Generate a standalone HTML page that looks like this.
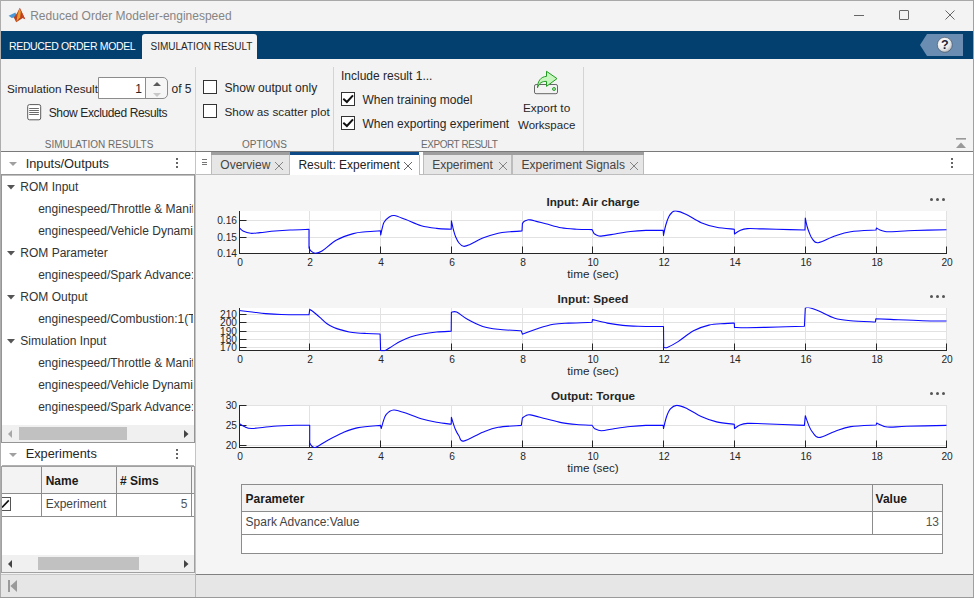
<!DOCTYPE html>
<html><head><meta charset="utf-8"><title>Reduced Order Modeler</title>
<style>
html,body{margin:0;padding:0;}
body{width:974px;height:598px;overflow:hidden;position:relative;background:#f3f3f3;font-family:"Liberation Sans", sans-serif;}
</style></head><body>
<div style="position:absolute;left:0px;top:0px;width:974px;height:1px;background:#a8a8a8"></div>
<div style="position:absolute;left:0px;top:0px;width:1px;height:598px;background:#adadad"></div>
<div style="position:absolute;left:973px;top:0px;width:1px;height:598px;background:#a0a0a0"></div>
<svg style="position:absolute;left:8px;top:7px" width="18" height="17" viewBox="0 0 18 17">
<path d="M0.6 8.8 L7.4 5.4 L9 10 L3.8 11 Z" fill="#4a97d6"/>
<path d="M5.8 10.6 L8.8 6.6 L11.8 0.8 L17.2 12.2 L14.8 11 L8.2 15.2 Z" fill="#b8401c"/>
<path d="M11.6 1.2 L9.6 7.5 L8.4 14.8 L12.2 10.2 L12.8 4.2 Z" fill="#ec9a2e"/>
<path d="M11.9 0.9 L17.2 12.2 L14.6 10.8 Z" fill="#c9452a"/>
</svg>
<div style="position:absolute;left:30.20px;top:9.84px;font-size:12px;line-height:12px;font-weight:400;color:#858585;white-space:nowrap;">Reduced Order Modeler-enginespeed</div>
<div style="position:absolute;left:854px;top:15px;width:10px;height:1px;background:#666"></div>
<div style="position:absolute;left:899px;top:10px;width:10px;height:10px;border:1px solid #666;box-sizing:border-box;border-radius:1px"></div>
<svg style="position:absolute;left:944px;top:9px" width="12" height="12" viewBox="0 0 12 12">
<path d="M1.5 1.5 L10.5 10.5 M10.5 1.5 L1.5 10.5" stroke="#666" stroke-width="1" fill="none"/></svg>
<div style="position:absolute;left:1px;top:31px;width:972px;height:28px;background:#03406f"></div>
<div style="position:absolute;left:9.00px;top:41.11px;font-size:10.5px;line-height:10.5px;font-weight:400;color:#ffffff;white-space:nowrap;letter-spacing:-0.35px">REDUCED ORDER MODEL</div>
<div style="position:absolute;left:142px;top:34px;width:115px;height:25px;background:#f3f3f3;border-radius:3px 3px 0 0"></div>
<div style="position:absolute;left:150.50px;top:41.83px;font-size:10px;line-height:10px;font-weight:400;color:#262626;white-space:nowrap;">SIMULATION RESULT</div>
<svg style="position:absolute;left:920px;top:34px" width="45" height="23" viewBox="0 0 45 23">
<path d="M7 0 H43 V22 H7 L0 11 Z" fill="#6b8db1"/>
<defs><radialGradient id="hg" cx="0.4" cy="0.35" r="0.75"><stop offset="0" stop-color="#ffffff"/><stop offset="0.6" stop-color="#e8e8e8"/><stop offset="1" stop-color="#a0a4aa"/></radialGradient></defs>
<circle cx="24.8" cy="10.8" r="7.5" fill="url(#hg)" stroke="#3a4a60" stroke-width="0.6"/>
<text x="24.8" y="15.3" text-anchor="middle" font-family="Liberation Sans" font-weight="700" font-size="12.5" fill="#1c2638">?</text>
</svg>
<div style="position:absolute;left:1px;top:59px;width:972px;height:92px;background:#f3f3f3"></div>
<div style="position:absolute;left:195px;top:67px;width:1px;height:84px;background:#d4d4d4"></div>
<div style="position:absolute;left:333px;top:67px;width:1px;height:84px;background:#d4d4d4"></div>
<div style="position:absolute;left:583px;top:67px;width:1px;height:84px;background:#d4d4d4"></div>
<div style="position:absolute;left:7.00px;top:82.90px;font-size:11.7px;line-height:11.7px;font-weight:400;color:#262626;white-space:nowrap;">Simulation Result</div>
<div style="position:absolute;left:98px;top:77px;width:70px;height:22px;background:linear-gradient(to right,#fff 47px,#f6f6f6 47px);border:1px solid #8c8c8c;box-sizing:border-box;border-radius:0 5px 5px 0"></div>
<div style="position:absolute;left:145px;top:78px;width:1px;height:20px;background:#8c8c8c"></div>
<div style="position:absolute;right:832.00px;top:82.64px;font-size:12px;line-height:12px;font-weight:400;color:#262626;white-space:nowrap;">1</div>
<svg style="position:absolute;left:150px;top:80px" width="14" height="18" viewBox="0 0 14 18">
<path d="M3 6 L7 2 L11 6 Z" fill="#5a5a5a"/><path d="M3 13 L7 17 L11 13 Z" fill="#c8c8c8"/></svg>
<div style="position:absolute;left:171.50px;top:82.64px;font-size:12px;line-height:12px;font-weight:400;color:#262626;white-space:nowrap;">of 5</div>
<svg style="position:absolute;left:26px;top:103px" width="16" height="18" viewBox="0 0 16 18">
<rect x="1.7" y="1.6" width="13" height="15.2" rx="1.8" fill="#fff" stroke="#5a5a5a" stroke-width="1"/>
<path d="M3.2 5.5 H12.9 M3.2 7.5 H12.9 M3.2 9.5 H12.9 M3.2 11.5 H12.9" stroke="#5a5a5a" stroke-width="0.9"/></svg>
<div style="position:absolute;left:48.70px;top:106.84px;font-size:12px;line-height:12px;font-weight:400;color:#262626;white-space:nowrap;letter-spacing:-0.36px">Show Excluded Results</div>
<div style="position:absolute;left:44.80px;top:139.53px;font-size:10px;line-height:10px;font-weight:400;color:#6b6b6b;white-space:nowrap;">SIMULATION RESULTS</div>
<div style="position:absolute;left:203px;top:80px;width:14px;height:14px;background:#fff;border:1px solid #333;box-sizing:border-box"></div>
<div style="position:absolute;left:203px;top:104px;width:14px;height:14px;background:#fff;border:1px solid #333;box-sizing:border-box"></div>
<div style="position:absolute;left:224.40px;top:82.16px;font-size:12.1px;line-height:12.1px;font-weight:400;color:#262626;white-space:nowrap;">Show output only</div>
<div style="position:absolute;left:224.40px;top:106.00px;font-size:11.7px;line-height:11.7px;font-weight:400;color:#262626;white-space:nowrap;">Show as scatter plot</div>
<div style="position:absolute;left:242.00px;top:139.53px;font-size:10px;line-height:10px;font-weight:400;color:#6b6b6b;white-space:nowrap;">OPTIONS</div>
<div style="position:absolute;left:341.00px;top:70.04px;font-size:12px;line-height:12px;font-weight:400;color:#262626;white-space:nowrap;">Include result 1...</div>
<div style="position:absolute;left:341px;top:92px;width:14px;height:14px;background:#fff;border:1px solid #333;box-sizing:border-box"></div>
<svg style="position:absolute;left:341px;top:92px" width="14" height="14" viewBox="0 0 14 14">
<path d="M2.3 6.8 L5.9 10 L12 3.4" stroke="#111" stroke-width="2" fill="none"/></svg>
<div style="position:absolute;left:341px;top:116px;width:14px;height:14px;background:#fff;border:1px solid #333;box-sizing:border-box"></div>
<svg style="position:absolute;left:341px;top:116px" width="14" height="14" viewBox="0 0 14 14">
<path d="M2.3 6.8 L5.9 10 L12 3.4" stroke="#111" stroke-width="2" fill="none"/></svg>
<div style="position:absolute;left:362.40px;top:94.24px;font-size:12px;line-height:12px;font-weight:400;color:#262626;white-space:nowrap;">When training model</div>
<div style="position:absolute;left:362.40px;top:117.64px;font-size:12px;line-height:12px;font-weight:400;color:#262626;white-space:nowrap;">When exporting experiment</div>
<svg style="position:absolute;left:532px;top:70px" width="28" height="26" viewBox="0 0 28 26">
<rect x="2.5" y="14.5" width="23" height="9.2" rx="1.6" fill="none" stroke="#666" stroke-width="1"/>
<circle cx="22" cy="19" r="1.5" fill="#a6dca6" stroke="#1f9b1f" stroke-width="0.9"/>
<path d="M5.5 17.8 C5.5 11 9 6.6 14.5 6.4 L14.5 1.3 L25 8.6 L14.5 16.4 L14.5 11.4 C10 11.2 7 13 5.5 17.8 Z" fill="#c6f5bd" stroke="#1f9b1f" stroke-width="1" stroke-linejoin="miter"/>
</svg>
<div style="position:absolute;left:523.00px;top:103.01px;font-size:11.8px;line-height:11.8px;font-weight:400;color:#262626;white-space:nowrap;">Export to</div>
<div style="position:absolute;left:518.00px;top:119.87px;font-size:11.5px;line-height:11.5px;font-weight:400;color:#262626;white-space:nowrap;">Workspace</div>
<div style="position:absolute;left:421.00px;top:139.53px;font-size:10px;line-height:10px;font-weight:400;color:#6b6b6b;white-space:nowrap;letter-spacing:-0.45px">EXPORT RESULT</div>
<svg style="position:absolute;left:955px;top:137px" width="12" height="12" viewBox="0 0 12 12">
<rect x="1" y="1" width="10" height="1.6" fill="#999"/><path d="M1 11 L6 5.5 L11 11 Z" fill="#999"/></svg>
<div style="position:absolute;left:1px;top:151px;width:972px;height:1px;background:#7a7a7a"></div>
<div style="position:absolute;left:1px;top:152px;width:194px;height:422px;background:#f3f3f3"></div>
<div style="position:absolute;left:195px;top:152px;width:1px;height:422px;background:#c4c4c4"></div>
<div style="position:absolute;left:1px;top:152px;width:194px;height:22px;background:#fff"></div>
<svg style="position:absolute;left:8px;top:160px" width="10" height="8" viewBox="0 0 10 8"><path d="M1 2 L9 2 L5 6 Z" fill="#a0a0a0"/></svg>
<div style="position:absolute;left:25.70px;top:157.56px;font-size:12.8px;line-height:12.8px;font-weight:400;color:#262626;white-space:nowrap;">Inputs/Outputs</div>
<div style="position:absolute;left:176px;top:158px;width:2px;height:2px;background:#666"></div>
<div style="position:absolute;left:176px;top:162px;width:2px;height:2px;background:#666"></div>
<div style="position:absolute;left:176px;top:166px;width:2px;height:2px;background:#666"></div>
<div style="position:absolute;left:1px;top:174px;width:194px;height:269px;background:#fff;border:1px solid #959595;box-sizing:border-box"></div>
<div style="position:absolute;left:2px;top:175px;width:192px;height:1px;background:#c0c0c0"></div>
<svg style="position:absolute;left:6px;top:183px" width="10" height="8" viewBox="0 0 10 8"><path d="M1 2 L9 2 L5 6.5 Z" fill="#555"/></svg>
<div style="position:absolute;left:20.30px;top:180.84px;font-size:12px;line-height:12px;font-weight:400;color:#333;white-space:nowrap;">ROM Input</div>
<div style="position:absolute;left:38.2px;top:202.84px;width:155px;overflow:hidden;font-size:12px;line-height:12px;padding-bottom:4px;color:#333;white-space:nowrap">enginespeed/Throttle &amp; Manifold</div>
<div style="position:absolute;left:38.2px;top:224.84px;width:155px;overflow:hidden;font-size:12px;line-height:12px;padding-bottom:4px;color:#333;white-space:nowrap">enginespeed/Vehicle Dynamics</div>
<svg style="position:absolute;left:6px;top:249px" width="10" height="8" viewBox="0 0 10 8"><path d="M1 2 L9 2 L5 6.5 Z" fill="#555"/></svg>
<div style="position:absolute;left:20.30px;top:246.84px;font-size:12px;line-height:12px;font-weight:400;color:#333;white-space:nowrap;">ROM Parameter</div>
<div style="position:absolute;left:38.2px;top:268.84px;width:155px;overflow:hidden;font-size:12px;line-height:12px;padding-bottom:4px;color:#333;white-space:nowrap">enginespeed/Spark Advance:Value</div>
<svg style="position:absolute;left:6px;top:293px" width="10" height="8" viewBox="0 0 10 8"><path d="M1 2 L9 2 L5 6.5 Z" fill="#555"/></svg>
<div style="position:absolute;left:20.30px;top:290.84px;font-size:12px;line-height:12px;font-weight:400;color:#333;white-space:nowrap;">ROM Output</div>
<div style="position:absolute;left:38.2px;top:312.84px;width:155px;overflow:hidden;font-size:12px;line-height:12px;padding-bottom:4px;color:#333;white-space:nowrap">enginespeed/Combustion:1(Torque)</div>
<svg style="position:absolute;left:6px;top:337px" width="10" height="8" viewBox="0 0 10 8"><path d="M1 2 L9 2 L5 6.5 Z" fill="#555"/></svg>
<div style="position:absolute;left:20.30px;top:334.84px;font-size:12px;line-height:12px;font-weight:400;color:#333;white-space:nowrap;">Simulation Input</div>
<div style="position:absolute;left:38.2px;top:356.84px;width:155px;overflow:hidden;font-size:12px;line-height:12px;padding-bottom:4px;color:#333;white-space:nowrap">enginespeed/Throttle &amp; Manifold</div>
<div style="position:absolute;left:38.2px;top:378.84px;width:155px;overflow:hidden;font-size:12px;line-height:12px;padding-bottom:4px;color:#333;white-space:nowrap">enginespeed/Vehicle Dynamics</div>
<div style="position:absolute;left:38.2px;top:400.84px;width:155px;overflow:hidden;font-size:12px;line-height:12px;padding-bottom:4px;color:#333;white-space:nowrap">enginespeed/Spark Advance:Value</div>
<div style="position:absolute;left:2px;top:425px;width:192px;height:17px;background:#f0f0f0"></div>
<div style="position:absolute;left:19px;top:427px;width:108px;height:13px;background:#c1c1c1"></div>
<svg style="position:absolute;left:6px;top:429px" width="8" height="10" viewBox="0 0 8 10"><path d="M6 1 L6 9 L2 5 Z" fill="#a8a8a8"/></svg>
<svg style="position:absolute;left:182px;top:429px" width="8" height="10" viewBox="0 0 8 10"><path d="M2 1 L2 9 L6.5 5 Z" fill="#444"/></svg>
<div style="position:absolute;left:1px;top:443px;width:194px;height:23px;background:#fff"></div>
<svg style="position:absolute;left:8px;top:451px" width="10" height="8" viewBox="0 0 10 8"><path d="M1 2 L9 2 L5 6 Z" fill="#a0a0a0"/></svg>
<div style="position:absolute;left:25.70px;top:448.36px;font-size:12.8px;line-height:12.8px;font-weight:400;color:#262626;white-space:nowrap;">Experiments</div>
<div style="position:absolute;left:176px;top:449px;width:2px;height:2px;background:#666"></div>
<div style="position:absolute;left:176px;top:453px;width:2px;height:2px;background:#666"></div>
<div style="position:absolute;left:176px;top:457px;width:2px;height:2px;background:#666"></div>
<div style="position:absolute;left:1px;top:466px;width:194px;height:107px;background:#fff;border:1px solid #a0a0a0;box-sizing:border-box"></div>
<div style="position:absolute;left:2px;top:465px;width:192px;height:1px;background:#b0b0b0"></div>
<div style="position:absolute;left:2px;top:467px;width:192px;height:26px;background:#f3f3f3"></div>
<div style="position:absolute;left:2px;top:493px;width:192px;height:1px;background:#8c8c8c"></div>
<div style="position:absolute;left:2px;top:516px;width:192px;height:1px;background:#8c8c8c"></div>
<div style="position:absolute;left:41px;top:467px;width:1px;height:50px;background:#8c8c8c"></div>
<div style="position:absolute;left:116px;top:467px;width:1px;height:50px;background:#8c8c8c"></div>
<div style="position:absolute;left:191px;top:467px;width:1px;height:50px;background:#8c8c8c"></div>
<div style="position:absolute;left:45.70px;top:475.24px;font-size:12px;line-height:12px;font-weight:700;color:#1a1a1a;white-space:nowrap;">Name</div>
<div style="position:absolute;left:120.00px;top:475.24px;font-size:12px;line-height:12px;font-weight:700;color:#1a1a1a;white-space:nowrap;"># Sims</div>
<div style="position:absolute;left:45.70px;top:498.04px;font-size:12px;line-height:12px;font-weight:400;color:#444;white-space:nowrap;">Experiment</div>
<div style="position:absolute;right:786.50px;top:498.04px;font-size:12px;line-height:12px;font-weight:400;color:#555;white-space:nowrap;">5</div>
<div style="position:absolute;left:2px;top:497px;width:9px;height:14px;background:#fff;border:1px solid #555;border-left:none;box-sizing:border-box"></div>
<svg style="position:absolute;left:2px;top:497px" width="10" height="14" viewBox="0 0 10 14"><path d="M0 10.5 L6.8 3.4" stroke="#111" stroke-width="1.6"/></svg>
<div style="position:absolute;left:2px;top:555px;width:192px;height:17px;background:#f0f0f0"></div>
<div style="position:absolute;left:38px;top:557px;width:101px;height:13px;background:#c1c1c1"></div>
<svg style="position:absolute;left:6px;top:559px" width="8" height="10" viewBox="0 0 8 10"><path d="M6 1 L6 9 L2 5 Z" fill="#444"/></svg>
<svg style="position:absolute;left:182px;top:559px" width="8" height="10" viewBox="0 0 8 10"><path d="M2 1 L2 9 L6.5 5 Z" fill="#444"/></svg>
<div style="position:absolute;left:1px;top:574px;width:194px;height:1px;background:#c8c8c8"></div>
<div style="position:absolute;left:196px;top:574px;width:777px;height:1px;background:#808080"></div>
<div style="position:absolute;left:1px;top:575px;width:972px;height:23px;background:#e6e6e6"></div>
<div style="position:absolute;left:195px;top:574px;width:1px;height:24px;background:#b8b8b8"></div>
<svg style="position:absolute;left:7px;top:579px" width="12" height="14" viewBox="0 0 12 14"><rect x="1" y="1" width="2" height="12" fill="#9a9a9a"/><path d="M10 1 L10 13 L3.4 7 Z" fill="#9a9a9a"/></svg>
<div style="position:absolute;left:0px;top:597px;width:974px;height:1px;background:#9a9a9a"></div>
<div style="position:absolute;left:196px;top:152px;width:777px;height:422px;background:#f5f5f5"></div>
<div style="position:absolute;left:196px;top:152px;width:777px;height:22px;background:#fff"></div>
<div style="position:absolute;left:196px;top:174px;width:777px;height:1px;background:#bdbdbd"></div>
<div style="position:absolute;left:202px;top:159px;width:5px;height:1px;background:#777"></div>
<div style="position:absolute;left:202px;top:161.5px;width:5px;height:1px;background:#777"></div>
<div style="position:absolute;left:202px;top:164px;width:5px;height:1px;background:#777"></div>
<div style="position:absolute;left:211px;top:152px;width:79px;height:22px;background:#e6e6e6;border-left:1px solid #bcbcbc;border-right:1px solid #bcbcbc;box-sizing:border-box"></div>
<div style="position:absolute;left:211px;top:152px;width:79px;height:3px;background:#9e9e9e"></div>
<div style="position:absolute;left:220.30px;top:158.54px;font-size:12px;line-height:12px;font-weight:400;color:#444;white-space:nowrap;">Overview</div>
<div style="position:absolute;left:290px;top:152px;width:129px;height:23px;background:#fff"></div>
<div style="position:absolute;left:290px;top:152px;width:129px;height:3px;background:#0e4a86"></div>
<div style="position:absolute;left:298.40px;top:158.54px;font-size:12px;line-height:12px;font-weight:400;color:#222;white-space:nowrap;">Result: Experiment</div>
<div style="position:absolute;left:423px;top:152px;width:89px;height:22px;background:#e6e6e6;border-left:1px solid #bcbcbc;border-right:1px solid #bcbcbc;box-sizing:border-box"></div>
<div style="position:absolute;left:423px;top:152px;width:89px;height:3px;background:#9e9e9e"></div>
<div style="position:absolute;left:432.20px;top:158.54px;font-size:12px;line-height:12px;font-weight:400;color:#444;white-space:nowrap;">Experiment</div>
<div style="position:absolute;left:512px;top:152px;width:132px;height:22px;background:#e6e6e6;border-left:1px solid #bcbcbc;border-right:1px solid #bcbcbc;box-sizing:border-box"></div>
<div style="position:absolute;left:512px;top:152px;width:132px;height:3px;background:#9e9e9e"></div>
<div style="position:absolute;left:521.50px;top:158.54px;font-size:12px;line-height:12px;font-weight:400;color:#444;white-space:nowrap;">Experiment Signals</div>
<div style="position:absolute;left:419px;top:155px;width:1px;height:20px;background:#bcbcbc"></div>
<svg style="position:absolute;left:274px;top:161px" width="10" height="10" viewBox="0 0 10 10"><path d="M1 1 L9 9 M9 1 L1 9" stroke="#777" stroke-width="0.9"/></svg>
<svg style="position:absolute;left:403px;top:161px" width="10" height="10" viewBox="0 0 10 10"><path d="M1 1 L9 9 M9 1 L1 9" stroke="#555" stroke-width="0.9"/></svg>
<svg style="position:absolute;left:497.5px;top:161px" width="10" height="10" viewBox="0 0 10 10"><path d="M1 1 L9 9 M9 1 L1 9" stroke="#777" stroke-width="0.9"/></svg>
<svg style="position:absolute;left:628.5px;top:161px" width="10" height="10" viewBox="0 0 10 10"><path d="M1 1 L9 9 M9 1 L1 9" stroke="#777" stroke-width="0.9"/></svg>
<div style="position:absolute;left:951px;top:158px;width:2px;height:2px;background:#666"></div>
<div style="position:absolute;left:951px;top:162px;width:2px;height:2px;background:#666"></div>
<div style="position:absolute;left:951px;top:166px;width:2px;height:2px;background:#666"></div>
<svg style="position:absolute;left:0;top:0" width="974" height="598" viewBox="0 0 974 598">
<defs>
<clipPath id="cp0"><rect x="239.0" y="210.5" width="708.0" height="44.0"/></clipPath>
<clipPath id="cp1"><rect x="239.0" y="307.5" width="708.0" height="44.0"/></clipPath>
<clipPath id="cp2"><rect x="239.0" y="404.5" width="708.0" height="44.0"/></clipPath>
</defs>
<rect x="239.0" y="211" width="708.0" height="42.5" fill="#fff"/>
<line x1="309.50" y1="211" x2="309.50" y2="253.5" stroke="#e2e2e2" stroke-width="1"/>
<line x1="380.50" y1="211" x2="380.50" y2="253.5" stroke="#e2e2e2" stroke-width="1"/>
<line x1="451.50" y1="211" x2="451.50" y2="253.5" stroke="#e2e2e2" stroke-width="1"/>
<line x1="522.50" y1="211" x2="522.50" y2="253.5" stroke="#e2e2e2" stroke-width="1"/>
<line x1="592.50" y1="211" x2="592.50" y2="253.5" stroke="#e2e2e2" stroke-width="1"/>
<line x1="663.50" y1="211" x2="663.50" y2="253.5" stroke="#e2e2e2" stroke-width="1"/>
<line x1="734.50" y1="211" x2="734.50" y2="253.5" stroke="#e2e2e2" stroke-width="1"/>
<line x1="805.50" y1="211" x2="805.50" y2="253.5" stroke="#e2e2e2" stroke-width="1"/>
<line x1="876.50" y1="211" x2="876.50" y2="253.5" stroke="#e2e2e2" stroke-width="1"/>
<line x1="946.50" y1="211" x2="946.50" y2="253.5" stroke="#e2e2e2" stroke-width="1"/>
<line x1="239.5" y1="220.5" x2="946.5" y2="220.5" stroke="#e2e2e2" stroke-width="1"/>
<line x1="239.5" y1="237.5" x2="946.5" y2="237.5" stroke="#e2e2e2" stroke-width="1"/>
<line x1="239.5" y1="211" x2="239.5" y2="254.0" stroke="#262626" stroke-width="1"/>
<line x1="239.0" y1="253.5" x2="947.0" y2="253.5" stroke="#262626" stroke-width="1"/>
<line x1="239.5" y1="220.5" x2="246.5" y2="220.5" stroke="#262626" stroke-width="1"/>
<text x="237" y="223.80" text-anchor="end" font-family="Liberation Sans" font-size="10.2" fill="#262626">0.16</text>
<line x1="239.5" y1="237.5" x2="246.5" y2="237.5" stroke="#262626" stroke-width="1"/>
<text x="237" y="240.80" text-anchor="end" font-family="Liberation Sans" font-size="10.2" fill="#262626">0.15</text>
<line x1="239.5" y1="253.5" x2="246.5" y2="253.5" stroke="#262626" stroke-width="1"/>
<text x="237" y="256.80" text-anchor="end" font-family="Liberation Sans" font-size="10.2" fill="#262626">0.14</text>
<line x1="239.50" y1="246.5" x2="239.50" y2="253.5" stroke="#262626" stroke-width="1"/>
<text x="240.10" y="266.0" text-anchor="middle" font-family="Liberation Sans" font-size="10.2" fill="#262626">0</text>
<line x1="309.50" y1="246.5" x2="309.50" y2="253.5" stroke="#262626" stroke-width="1"/>
<text x="310.10" y="266.0" text-anchor="middle" font-family="Liberation Sans" font-size="10.2" fill="#262626">2</text>
<line x1="380.50" y1="246.5" x2="380.50" y2="253.5" stroke="#262626" stroke-width="1"/>
<text x="381.10" y="266.0" text-anchor="middle" font-family="Liberation Sans" font-size="10.2" fill="#262626">4</text>
<line x1="451.50" y1="246.5" x2="451.50" y2="253.5" stroke="#262626" stroke-width="1"/>
<text x="452.10" y="266.0" text-anchor="middle" font-family="Liberation Sans" font-size="10.2" fill="#262626">6</text>
<line x1="522.50" y1="246.5" x2="522.50" y2="253.5" stroke="#262626" stroke-width="1"/>
<text x="523.10" y="266.0" text-anchor="middle" font-family="Liberation Sans" font-size="10.2" fill="#262626">8</text>
<line x1="592.50" y1="246.5" x2="592.50" y2="253.5" stroke="#262626" stroke-width="1"/>
<text x="593.10" y="266.0" text-anchor="middle" font-family="Liberation Sans" font-size="10.2" fill="#262626">10</text>
<line x1="663.50" y1="246.5" x2="663.50" y2="253.5" stroke="#262626" stroke-width="1"/>
<text x="664.10" y="266.0" text-anchor="middle" font-family="Liberation Sans" font-size="10.2" fill="#262626">12</text>
<line x1="734.50" y1="246.5" x2="734.50" y2="253.5" stroke="#262626" stroke-width="1"/>
<text x="735.10" y="266.0" text-anchor="middle" font-family="Liberation Sans" font-size="10.2" fill="#262626">14</text>
<line x1="805.50" y1="246.5" x2="805.50" y2="253.5" stroke="#262626" stroke-width="1"/>
<text x="806.10" y="266.0" text-anchor="middle" font-family="Liberation Sans" font-size="10.2" fill="#262626">16</text>
<line x1="876.50" y1="246.5" x2="876.50" y2="253.5" stroke="#262626" stroke-width="1"/>
<text x="877.10" y="266.0" text-anchor="middle" font-family="Liberation Sans" font-size="10.2" fill="#262626">18</text>
<line x1="946.50" y1="246.5" x2="946.50" y2="253.5" stroke="#262626" stroke-width="1"/>
<text x="947.10" y="266.0" text-anchor="middle" font-family="Liberation Sans" font-size="10.2" fill="#262626">20</text>
<path d="M239,227.5 C239.67,228.08 241.05,230.03 243.00,231.00 C244.95,231.97 247.87,233.03 250.70,233.30 C253.53,233.57 255.95,232.98 260.00,232.60 C264.05,232.22 270.00,231.43 275.00,231.00 C280.00,230.57 284.33,230.27 290.00,230.00 C295.67,229.73 305.83,229.50 309.00,229.40 L309,247.9 C309.33,248.42 309.93,250.12 311.00,251.00 C312.07,251.88 313.57,253.20 315.40,253.20 C317.23,253.20 318.47,253.20 322.00,251.00 C325.53,248.80 331.38,242.90 336.60,240.00 C341.82,237.10 348.40,234.97 353.30,233.60 C358.20,232.23 361.47,232.25 366.00,231.80 C370.53,231.35 378.08,231.05 380.50,230.90 L380.7,235 C381.00,233.67 381.92,229.17 382.50,227.00 C383.08,224.83 383.13,223.62 384.20,222.00 C385.27,220.38 387.22,218.38 388.90,217.30 C390.58,216.22 391.48,215.12 394.30,215.50 C397.12,215.88 401.32,217.88 405.80,219.60 C410.28,221.32 416.07,224.33 421.20,225.80 C426.33,227.27 431.60,227.83 436.60,228.40 C441.60,228.97 448.77,229.07 451.20,229.20 L451.4,220.9 C451.75,222.42 452.82,227.40 453.50,230.00 C454.18,232.60 454.58,234.33 455.50,236.50 C456.42,238.67 457.65,241.37 459.00,243.00 C460.35,244.63 461.77,246.05 463.60,246.30 C465.43,246.55 466.80,245.87 470.00,244.50 C473.20,243.13 478.10,239.98 482.80,238.10 C487.50,236.22 493.67,234.25 498.20,233.20 C502.73,232.15 506.03,232.17 510.00,231.80 C513.97,231.43 520.00,231.13 522.00,231.00 L522.4,223.5 C522.67,223.17 523.23,222.05 524.00,221.50 C524.77,220.95 525.93,220.47 527.00,220.20 C528.07,219.93 527.27,219.30 530.40,219.90 C533.53,220.50 540.67,222.48 545.80,223.80 C550.93,225.12 556.07,226.90 561.20,227.80 C566.33,228.70 571.47,228.90 576.60,229.20 C581.73,229.50 589.43,229.53 592.00,229.60 L594,233.5 C594.58,233.83 596.30,235.07 597.50,235.50 C598.70,235.93 598.27,236.35 601.20,236.10 C604.13,235.85 610.22,234.77 615.10,234.00 C619.98,233.23 625.37,232.10 630.50,231.50 C635.63,230.90 640.45,230.58 645.90,230.40 C651.35,230.22 660.32,230.40 663.20,230.40 L663.5,235.5 C663.88,233.75 664.90,228.15 665.80,225.00 C666.70,221.85 667.87,218.68 668.90,216.60 C669.93,214.52 670.85,213.45 672.00,212.50 C673.15,211.55 673.50,210.62 675.80,210.90 C678.10,211.18 681.57,212.23 685.80,214.20 C690.03,216.17 696.07,220.52 701.20,222.70 C706.33,224.88 711.08,226.22 716.60,227.30 C722.12,228.38 731.35,228.88 734.30,229.20 L734.5,234 C735.42,233.42 737.85,231.40 740.00,230.50 C742.15,229.60 743.60,228.87 747.40,228.60 C751.20,228.33 755.70,228.73 762.80,228.90 C769.90,229.07 782.97,229.42 790.00,229.60 C797.03,229.78 802.50,229.93 805.00,230.00 L805.3,218 C805.58,219.33 806.33,223.53 807.00,226.00 C807.67,228.47 808.38,230.60 809.30,232.80 C810.22,235.00 811.03,237.55 812.50,239.20 C813.97,240.85 814.38,243.23 818.10,242.70 C821.82,242.17 829.37,237.83 834.80,236.00 C840.23,234.17 843.83,232.70 850.70,231.70 C857.57,230.70 871.78,230.28 876.00,230.00 L876.5,228 C877.08,228.33 878.73,229.45 880.00,230.00 C881.27,230.55 882.35,231.02 884.10,231.30 C885.85,231.58 885.45,231.83 890.50,231.70 C895.55,231.57 905.07,230.83 914.40,230.50 C923.73,230.17 941.15,229.83 946.50,229.70" fill="none" stroke="#0a0aff" stroke-width="1.1" stroke-linejoin="round" clip-path="url(#cp0)"/>
<text x="593" y="277.7" text-anchor="middle" font-family="Liberation Sans" font-size="11.7" fill="#262626">time (sec)</text>
<text x="593" y="205.8" text-anchor="middle" font-family="Liberation Sans" font-weight="700" font-size="11.7" fill="#262626">Input: Air charge</text>
<circle cx="931.5" cy="199.5" r="1.5" fill="#555"/>
<circle cx="937.5" cy="199.5" r="1.5" fill="#555"/>
<circle cx="943.5" cy="199.5" r="1.5" fill="#555"/>
<rect x="239.0" y="308" width="708.0" height="42.5" fill="#fff"/>
<line x1="309.50" y1="308" x2="309.50" y2="350.5" stroke="#e2e2e2" stroke-width="1"/>
<line x1="380.50" y1="308" x2="380.50" y2="350.5" stroke="#e2e2e2" stroke-width="1"/>
<line x1="451.50" y1="308" x2="451.50" y2="350.5" stroke="#e2e2e2" stroke-width="1"/>
<line x1="522.50" y1="308" x2="522.50" y2="350.5" stroke="#e2e2e2" stroke-width="1"/>
<line x1="592.50" y1="308" x2="592.50" y2="350.5" stroke="#e2e2e2" stroke-width="1"/>
<line x1="663.50" y1="308" x2="663.50" y2="350.5" stroke="#e2e2e2" stroke-width="1"/>
<line x1="734.50" y1="308" x2="734.50" y2="350.5" stroke="#e2e2e2" stroke-width="1"/>
<line x1="805.50" y1="308" x2="805.50" y2="350.5" stroke="#e2e2e2" stroke-width="1"/>
<line x1="876.50" y1="308" x2="876.50" y2="350.5" stroke="#e2e2e2" stroke-width="1"/>
<line x1="946.50" y1="308" x2="946.50" y2="350.5" stroke="#e2e2e2" stroke-width="1"/>
<line x1="239.5" y1="314.5" x2="946.5" y2="314.5" stroke="#e2e2e2" stroke-width="1"/>
<line x1="239.5" y1="322.5" x2="946.5" y2="322.5" stroke="#e2e2e2" stroke-width="1"/>
<line x1="239.5" y1="331.5" x2="946.5" y2="331.5" stroke="#e2e2e2" stroke-width="1"/>
<line x1="239.5" y1="339.5" x2="946.5" y2="339.5" stroke="#e2e2e2" stroke-width="1"/>
<line x1="239.5" y1="347.5" x2="946.5" y2="347.5" stroke="#e2e2e2" stroke-width="1"/>
<line x1="239.5" y1="308" x2="239.5" y2="351.0" stroke="#262626" stroke-width="1"/>
<line x1="239.0" y1="350.5" x2="947.0" y2="350.5" stroke="#262626" stroke-width="1"/>
<line x1="239.5" y1="314.5" x2="246.5" y2="314.5" stroke="#262626" stroke-width="1"/>
<text x="237" y="317.80" text-anchor="end" font-family="Liberation Sans" font-size="10.2" fill="#262626">210</text>
<line x1="239.5" y1="322.5" x2="246.5" y2="322.5" stroke="#262626" stroke-width="1"/>
<text x="237" y="325.80" text-anchor="end" font-family="Liberation Sans" font-size="10.2" fill="#262626">200</text>
<line x1="239.5" y1="331.5" x2="246.5" y2="331.5" stroke="#262626" stroke-width="1"/>
<text x="237" y="334.80" text-anchor="end" font-family="Liberation Sans" font-size="10.2" fill="#262626">190</text>
<line x1="239.5" y1="339.5" x2="246.5" y2="339.5" stroke="#262626" stroke-width="1"/>
<text x="237" y="342.80" text-anchor="end" font-family="Liberation Sans" font-size="10.2" fill="#262626">180</text>
<line x1="239.5" y1="347.5" x2="246.5" y2="347.5" stroke="#262626" stroke-width="1"/>
<text x="237" y="350.80" text-anchor="end" font-family="Liberation Sans" font-size="10.2" fill="#262626">170</text>
<line x1="239.50" y1="343.5" x2="239.50" y2="350.5" stroke="#262626" stroke-width="1"/>
<text x="240.10" y="363.0" text-anchor="middle" font-family="Liberation Sans" font-size="10.2" fill="#262626">0</text>
<line x1="309.50" y1="343.5" x2="309.50" y2="350.5" stroke="#262626" stroke-width="1"/>
<text x="310.10" y="363.0" text-anchor="middle" font-family="Liberation Sans" font-size="10.2" fill="#262626">2</text>
<line x1="380.50" y1="343.5" x2="380.50" y2="350.5" stroke="#262626" stroke-width="1"/>
<text x="381.10" y="363.0" text-anchor="middle" font-family="Liberation Sans" font-size="10.2" fill="#262626">4</text>
<line x1="451.50" y1="343.5" x2="451.50" y2="350.5" stroke="#262626" stroke-width="1"/>
<text x="452.10" y="363.0" text-anchor="middle" font-family="Liberation Sans" font-size="10.2" fill="#262626">6</text>
<line x1="522.50" y1="343.5" x2="522.50" y2="350.5" stroke="#262626" stroke-width="1"/>
<text x="523.10" y="363.0" text-anchor="middle" font-family="Liberation Sans" font-size="10.2" fill="#262626">8</text>
<line x1="592.50" y1="343.5" x2="592.50" y2="350.5" stroke="#262626" stroke-width="1"/>
<text x="593.10" y="363.0" text-anchor="middle" font-family="Liberation Sans" font-size="10.2" fill="#262626">10</text>
<line x1="663.50" y1="343.5" x2="663.50" y2="350.5" stroke="#262626" stroke-width="1"/>
<text x="664.10" y="363.0" text-anchor="middle" font-family="Liberation Sans" font-size="10.2" fill="#262626">12</text>
<line x1="734.50" y1="343.5" x2="734.50" y2="350.5" stroke="#262626" stroke-width="1"/>
<text x="735.10" y="363.0" text-anchor="middle" font-family="Liberation Sans" font-size="10.2" fill="#262626">14</text>
<line x1="805.50" y1="343.5" x2="805.50" y2="350.5" stroke="#262626" stroke-width="1"/>
<text x="806.10" y="363.0" text-anchor="middle" font-family="Liberation Sans" font-size="10.2" fill="#262626">16</text>
<line x1="876.50" y1="343.5" x2="876.50" y2="350.5" stroke="#262626" stroke-width="1"/>
<text x="877.10" y="363.0" text-anchor="middle" font-family="Liberation Sans" font-size="10.2" fill="#262626">18</text>
<line x1="946.50" y1="343.5" x2="946.50" y2="350.5" stroke="#262626" stroke-width="1"/>
<text x="947.10" y="363.0" text-anchor="middle" font-family="Liberation Sans" font-size="10.2" fill="#262626">20</text>
<path d="M239,310.5 C241.17,310.75 247.53,311.48 252.00,312.00 C256.47,312.52 260.93,313.18 265.80,313.60 C270.67,314.02 274.00,314.30 281.20,314.50 C288.40,314.70 304.37,314.75 309.00,314.80 L309.75,309.4 C310.34,309.78 311.51,310.28 313.30,311.70 C315.09,313.12 318.27,315.93 320.50,317.90 C322.73,319.87 324.47,321.92 326.70,323.50 C328.93,325.08 331.50,326.33 333.90,327.40 C336.30,328.47 338.53,329.13 341.10,329.90 C343.67,330.67 346.57,331.48 349.30,332.00 C352.03,332.52 354.60,332.75 357.50,333.00 C360.40,333.25 362.93,333.33 366.70,333.50 C370.47,333.67 377.87,333.92 380.10,334.00 L380.6,350.5 C381.37,350.50 383.23,351.23 385.20,350.50 C387.17,349.77 389.93,347.60 392.40,346.10 C394.87,344.60 397.00,343.02 400.00,341.50 C403.00,339.98 406.87,338.22 410.40,337.00 C413.93,335.78 416.83,335.03 421.20,334.20 C425.57,333.37 431.60,332.48 436.60,332.00 C441.60,331.52 448.77,331.42 451.20,331.30 L451.4,312.3 C452.27,312.25 453.93,310.83 456.60,312.00 C459.27,313.17 463.03,316.88 467.40,319.30 C471.77,321.72 477.67,324.83 482.80,326.50 C487.93,328.17 491.78,328.58 498.20,329.30 C504.62,330.02 517.45,330.55 521.30,330.80 L522.4,334.2 C525.02,333.25 532.92,330.15 538.10,328.50 C543.28,326.85 548.37,325.20 553.50,324.30 C558.63,323.40 562.48,323.43 568.90,323.10 C575.32,322.77 588.15,322.43 592.00,322.30 L592.5,319.6 C594.98,320.18 602.35,322.13 607.40,323.10 C612.45,324.07 617.67,324.88 622.80,325.40 C627.93,325.92 631.42,326.02 638.20,326.20 C644.98,326.38 659.28,326.45 663.50,326.50 L663.7,347.4 C664.30,347.40 664.90,348.37 667.30,347.40 C669.70,346.43 673.73,344.37 678.10,341.60 C682.47,338.83 688.37,333.55 693.50,330.80 C698.63,328.05 703.77,326.30 708.90,325.10 C714.03,323.90 720.07,323.93 724.30,323.60 C728.53,323.27 732.63,323.18 734.30,323.10 L734.5,327.4 C736.65,327.45 740.12,327.77 747.40,327.70 C754.68,327.63 768.70,327.25 778.20,327.00 C787.70,326.75 800.03,326.33 804.40,326.20 L805.3,308 C805.83,307.92 806.23,306.98 808.50,307.50 C810.77,308.02 814.52,309.30 818.90,311.10 C823.28,312.90 829.50,316.70 834.80,318.30 C840.10,319.90 843.93,320.08 850.70,320.70 C857.47,321.32 871.28,321.78 875.40,322.00 L875.8,318.8 C878.25,318.90 882.75,319.08 890.50,319.40 C898.25,319.72 912.97,320.43 922.30,320.70 C931.63,320.97 942.47,320.95 946.50,321.00" fill="none" stroke="#0a0aff" stroke-width="1.1" stroke-linejoin="round" clip-path="url(#cp1)"/>
<text x="593" y="374.7" text-anchor="middle" font-family="Liberation Sans" font-size="11.7" fill="#262626">time (sec)</text>
<text x="593" y="302.8" text-anchor="middle" font-family="Liberation Sans" font-weight="700" font-size="11.7" fill="#262626">Input: Speed</text>
<circle cx="931.5" cy="296.5" r="1.5" fill="#555"/>
<circle cx="937.5" cy="296.5" r="1.5" fill="#555"/>
<circle cx="943.5" cy="296.5" r="1.5" fill="#555"/>
<rect x="239.0" y="405" width="708.0" height="42.5" fill="#fff"/>
<line x1="309.50" y1="405" x2="309.50" y2="447.5" stroke="#e2e2e2" stroke-width="1"/>
<line x1="380.50" y1="405" x2="380.50" y2="447.5" stroke="#e2e2e2" stroke-width="1"/>
<line x1="451.50" y1="405" x2="451.50" y2="447.5" stroke="#e2e2e2" stroke-width="1"/>
<line x1="522.50" y1="405" x2="522.50" y2="447.5" stroke="#e2e2e2" stroke-width="1"/>
<line x1="592.50" y1="405" x2="592.50" y2="447.5" stroke="#e2e2e2" stroke-width="1"/>
<line x1="663.50" y1="405" x2="663.50" y2="447.5" stroke="#e2e2e2" stroke-width="1"/>
<line x1="734.50" y1="405" x2="734.50" y2="447.5" stroke="#e2e2e2" stroke-width="1"/>
<line x1="805.50" y1="405" x2="805.50" y2="447.5" stroke="#e2e2e2" stroke-width="1"/>
<line x1="876.50" y1="405" x2="876.50" y2="447.5" stroke="#e2e2e2" stroke-width="1"/>
<line x1="946.50" y1="405" x2="946.50" y2="447.5" stroke="#e2e2e2" stroke-width="1"/>
<line x1="239.5" y1="405.5" x2="946.5" y2="405.5" stroke="#e2e2e2" stroke-width="1"/>
<line x1="239.5" y1="425.5" x2="946.5" y2="425.5" stroke="#e2e2e2" stroke-width="1"/>
<line x1="239.5" y1="445.5" x2="946.5" y2="445.5" stroke="#e2e2e2" stroke-width="1"/>
<line x1="239.5" y1="405" x2="239.5" y2="448.0" stroke="#262626" stroke-width="1"/>
<line x1="239.0" y1="447.5" x2="947.0" y2="447.5" stroke="#262626" stroke-width="1"/>
<line x1="239.5" y1="405.5" x2="246.5" y2="405.5" stroke="#262626" stroke-width="1"/>
<text x="237" y="408.80" text-anchor="end" font-family="Liberation Sans" font-size="10.2" fill="#262626">30</text>
<line x1="239.5" y1="425.5" x2="246.5" y2="425.5" stroke="#262626" stroke-width="1"/>
<text x="237" y="428.80" text-anchor="end" font-family="Liberation Sans" font-size="10.2" fill="#262626">25</text>
<line x1="239.5" y1="445.5" x2="246.5" y2="445.5" stroke="#262626" stroke-width="1"/>
<text x="237" y="448.80" text-anchor="end" font-family="Liberation Sans" font-size="10.2" fill="#262626">20</text>
<line x1="239.50" y1="440.5" x2="239.50" y2="447.5" stroke="#262626" stroke-width="1"/>
<text x="240.10" y="460.0" text-anchor="middle" font-family="Liberation Sans" font-size="10.2" fill="#262626">0</text>
<line x1="309.50" y1="440.5" x2="309.50" y2="447.5" stroke="#262626" stroke-width="1"/>
<text x="310.10" y="460.0" text-anchor="middle" font-family="Liberation Sans" font-size="10.2" fill="#262626">2</text>
<line x1="380.50" y1="440.5" x2="380.50" y2="447.5" stroke="#262626" stroke-width="1"/>
<text x="381.10" y="460.0" text-anchor="middle" font-family="Liberation Sans" font-size="10.2" fill="#262626">4</text>
<line x1="451.50" y1="440.5" x2="451.50" y2="447.5" stroke="#262626" stroke-width="1"/>
<text x="452.10" y="460.0" text-anchor="middle" font-family="Liberation Sans" font-size="10.2" fill="#262626">6</text>
<line x1="522.50" y1="440.5" x2="522.50" y2="447.5" stroke="#262626" stroke-width="1"/>
<text x="523.10" y="460.0" text-anchor="middle" font-family="Liberation Sans" font-size="10.2" fill="#262626">8</text>
<line x1="592.50" y1="440.5" x2="592.50" y2="447.5" stroke="#262626" stroke-width="1"/>
<text x="593.10" y="460.0" text-anchor="middle" font-family="Liberation Sans" font-size="10.2" fill="#262626">10</text>
<line x1="663.50" y1="440.5" x2="663.50" y2="447.5" stroke="#262626" stroke-width="1"/>
<text x="664.10" y="460.0" text-anchor="middle" font-family="Liberation Sans" font-size="10.2" fill="#262626">12</text>
<line x1="734.50" y1="440.5" x2="734.50" y2="447.5" stroke="#262626" stroke-width="1"/>
<text x="735.10" y="460.0" text-anchor="middle" font-family="Liberation Sans" font-size="10.2" fill="#262626">14</text>
<line x1="805.50" y1="440.5" x2="805.50" y2="447.5" stroke="#262626" stroke-width="1"/>
<text x="806.10" y="460.0" text-anchor="middle" font-family="Liberation Sans" font-size="10.2" fill="#262626">16</text>
<line x1="876.50" y1="440.5" x2="876.50" y2="447.5" stroke="#262626" stroke-width="1"/>
<text x="877.10" y="460.0" text-anchor="middle" font-family="Liberation Sans" font-size="10.2" fill="#262626">18</text>
<line x1="946.50" y1="440.5" x2="946.50" y2="447.5" stroke="#262626" stroke-width="1"/>
<text x="947.10" y="460.0" text-anchor="middle" font-family="Liberation Sans" font-size="10.2" fill="#262626">20</text>
<path d="M239,423.4 C239.87,423.92 242.05,425.65 244.20,426.50 C246.35,427.35 247.02,428.55 251.90,428.50 C256.78,428.45 266.05,426.73 273.50,426.20 C280.95,425.67 290.57,425.45 296.60,425.30 C302.63,425.15 307.52,425.30 309.70,425.30 L309.7,442.7 C310.08,443.28 310.97,445.45 312.00,446.20 C313.03,446.95 313.33,448.17 315.90,447.20 C318.47,446.23 322.92,442.82 327.40,440.40 C331.88,437.98 337.67,434.83 342.80,432.70 C347.93,430.57 351.92,428.82 358.20,427.60 C364.48,426.38 376.78,425.77 380.50,425.40 L381.2,428.5 C381.83,426.50 383.72,419.27 385.00,416.50 C386.28,413.73 387.35,412.98 388.90,411.90 C390.45,410.82 391.48,409.80 394.30,410.00 C397.12,410.20 401.32,411.63 405.80,413.10 C410.28,414.57 416.07,417.27 421.20,418.80 C426.33,420.33 431.60,421.40 436.60,422.30 C441.60,423.20 448.77,423.88 451.20,424.20 L451.4,417.3 C452.02,419.22 453.83,425.68 455.10,428.80 C456.37,431.92 457.58,433.95 459.00,436.00 C460.42,438.05 459.63,441.73 463.60,441.10 C467.57,440.47 477.03,434.50 482.80,432.20 C488.57,429.90 491.78,428.43 498.20,427.30 C504.62,426.17 517.45,425.72 521.30,425.40 L522.4,418 C522.97,417.62 524.47,416.22 525.80,415.70 C527.13,415.18 527.07,414.38 530.40,414.90 C533.73,415.42 540.67,417.52 545.80,418.80 C550.93,420.08 556.07,421.65 561.20,422.60 C566.33,423.55 571.47,424.05 576.60,424.50 C581.73,424.95 589.43,425.17 592.00,425.30 L594.3,428.5 C595.45,428.87 597.73,430.70 601.20,430.70 C604.67,430.70 610.22,429.20 615.10,428.50 C619.98,427.80 625.37,427.02 630.50,426.50 C635.63,425.98 640.45,425.58 645.90,425.40 C651.35,425.22 660.32,425.40 663.20,425.40 L663.5,428.5 C664.02,426.50 665.45,419.78 666.60,416.50 C667.75,413.22 668.73,410.65 670.40,408.80 C672.07,406.95 674.03,405.53 676.60,405.40 C679.17,405.27 681.70,406.15 685.80,408.00 C689.90,409.85 696.07,414.18 701.20,416.50 C706.33,418.82 711.08,420.62 716.60,421.90 C722.12,423.18 731.35,423.82 734.30,424.20 L734.5,428.5 C735.42,427.92 737.85,425.85 740.00,425.00 C742.15,424.15 743.60,423.62 747.40,423.40 C751.20,423.18 753.30,423.37 762.80,423.70 C772.30,424.03 797.47,425.12 804.40,425.40 L805.3,415.8 C805.97,417.60 808.10,423.87 809.30,426.60 C810.50,429.33 810.90,430.38 812.50,432.20 C814.10,434.02 815.18,437.63 818.90,437.50 C822.62,437.37 829.50,433.22 834.80,431.40 C840.10,429.58 843.80,427.67 850.70,426.60 C857.60,425.53 871.95,425.27 876.20,425.00 L876.6,423.1 C878.38,423.75 882.33,426.47 887.30,427.00 C892.27,427.53 896.53,426.57 906.40,426.30 C916.27,426.03 939.82,425.55 946.50,425.40" fill="none" stroke="#0a0aff" stroke-width="1.1" stroke-linejoin="round" clip-path="url(#cp2)"/>
<text x="593" y="471.7" text-anchor="middle" font-family="Liberation Sans" font-size="11.7" fill="#262626">time (sec)</text>
<text x="593" y="399.8" text-anchor="middle" font-family="Liberation Sans" font-weight="700" font-size="11.7" fill="#262626">Output: Torque</text>
<circle cx="931.5" cy="393.5" r="1.5" fill="#555"/>
<circle cx="937.5" cy="393.5" r="1.5" fill="#555"/>
<circle cx="943.5" cy="393.5" r="1.5" fill="#555"/>
</svg>
<div style="position:absolute;left:241px;top:484px;width:702px;height:70px;background:#fff;border:1px solid #8c8c8c;box-sizing:border-box"></div>
<div style="position:absolute;left:242px;top:485px;width:700px;height:26px;background:#f3f3f3"></div>
<div style="position:absolute;left:242px;top:511px;width:700px;height:1px;background:#8c8c8c"></div>
<div style="position:absolute;left:242px;top:534px;width:700px;height:1px;background:#8c8c8c"></div>
<div style="position:absolute;left:872px;top:485px;width:1px;height:50px;background:#8c8c8c"></div>
<div style="position:absolute;left:245.60px;top:492.54px;font-size:12px;line-height:12px;font-weight:700;color:#1a1a1a;white-space:nowrap;">Parameter</div>
<div style="position:absolute;left:875.60px;top:492.54px;font-size:12px;line-height:12px;font-weight:700;color:#1a1a1a;white-space:nowrap;">Value</div>
<div style="position:absolute;left:245.60px;top:515.94px;font-size:12px;line-height:12px;font-weight:400;color:#444;white-space:nowrap;">Spark Advance:Value</div>
<div style="position:absolute;right:35.00px;top:515.94px;font-size:12px;line-height:12px;font-weight:400;color:#555;white-space:nowrap;">13</div>
</body></html>
